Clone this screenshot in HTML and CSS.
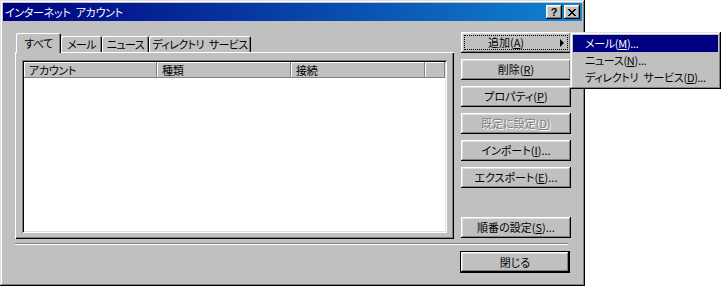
FILE: index.html
```html
<!DOCTYPE html>
<html lang="ja">
<head>
    <meta charset="UTF-8">
    <title>インターネット アカウント</title>
    <link rel="stylesheet" href="styles.css">
</head>
<body>
  <div class="dialog">
    <div class="titlebar">
      <span class="title">インターネット&ensp;アカウント</span>
      <div class="title-btns">
        <span class="tbtn help">?</span>
        <span class="tbtn">
          <svg width="8" height="7" viewBox="0 0 8 7">
            <path d="M0 0h2v1h1v1h2v-1h1v-1h2v1h-1v1h-1v1h-1v1h1v1h1v1h1v1h-2v-1h-1v-1h-2v1h-1v1h-2v-1h1v-1h1v-1h1v-1h-1v-1h-1v-1h-1z" fill="#000"/>
          </svg>
        </span>
      </div>
    </div>

    <div class="content">
      <div class="main">
        <div class="tabarea">
          <div class="tabs">
            <div class="tab active">すべて</div>
            <div class="tab w-mail">メール</div>
            <div class="tab w-news">ニュース</div>
            <div class="tab w-dir">ディレクトリ&ensp;サービス</div>
          </div>
          <div class="panel">
            <div class="listview">
              <div class="lv-header">
                <div class="col">アカウント</div>
                <div class="col">種類</div>
                <div class="col">接続</div>
                <div class="col filler"></div>
              </div>
            </div>
          </div>
        </div>

        <div class="buttons">
          <button class="btn focused has-arrow">追加(<u>A</u>)<span class="arrow"></span></button>
          <button class="btn">削除(<u>R</u>)</button>
          <button class="btn">プロパティ(<u>P</u>)</button>
          <button class="btn disabled">既定に設定(<u>D</u>)</button>
          <button class="btn">インポート(<u>I</u>)...</button>
          <button class="btn">エクスポート(<u>E</u>)...</button>
          <button class="btn bottom">順番の設定(<u>S</u>)...</button>
        </div>
      </div>

      <div class="separator"></div>

      <div class="footer">
        <button class="btn default">閉じる</button>
      </div>
    </div>
  </div>

  <div class="menu">
    <div class="menu-item selected">メール(<u>M</u>)...</div>
    <div class="menu-item">ニュース(<u>N</u>)...</div>
    <div class="menu-item">ディレクトリ&ensp;サービス(<u>D</u>)...</div>
  </div>
</body>
</html>
```

FILE: styles.css
```css
body {
    margin: 0;
    background-color: #fff;
    font-family: "Noto Sans CJK JP", sans-serif;
    font-size: 11px;
    font-feature-settings: "palt";
    letter-spacing: -0.3px;
    color: #000;
}

.dialog {
    width: 585px;
    height: 286px;
    box-sizing: border-box;
    padding: 3px;
    background-color: #c0c0c0;
    box-shadow: inset -1px -1px #000, inset 1px 1px #dfdfdf,
                inset -2px -2px #808080, inset 2px 2px #fff;
}

.titlebar {
    height: 18px;
    padding: 0 2px;
    display: flex;
    align-items: center;
    justify-content: space-between;
    background: linear-gradient(to right, #000080, #1084d0);
    color: #fff;
}

.title {
    line-height: 18px;
}

.title-btns {
    display: flex;
    gap: 2px;
}

.tbtn {
    width: 16px;
    height: 14px;
    display: flex;
    align-items: center;
    justify-content: center;
    background-color: #c0c0c0;
    box-shadow: inset -1px -1px #000, inset 1px 1px #fff,
                inset -2px -2px #808080, inset 2px 2px #dfdfdf;
}

.tbtn.help {
    font: bold 11px "Liberation Sans", sans-serif;
    color: #000;
    line-height: 14px;
}

.content {
    padding: 11px 12px 0 12px;
}

.main {
    display: flex;
    gap: 7px;
    align-items: flex-start;
}

/* tabs */

.tabarea {
    width: 439px;
    margin-top: 1px;
}

.tabs {
    height: 19px;
    padding-left: 1px;
    display: flex;
    align-items: flex-end;
    position: relative;
    z-index: 1;
}

.tab {
    height: 16px;
    box-sizing: border-box;
    display: flex;
    align-items: center;
    justify-content: center;
    line-height: 16px;
    letter-spacing: -0.6px;
    white-space: nowrap;
    background-color: #c0c0c0;
    border-radius: 2px 2px 0 0;
    box-shadow: inset 1px 1px #fff, inset -1px 0 #000, inset -2px 0 #808080;
}

.tab.active {
    width: 45px;
    height: 20px;
    margin-bottom: -1px;
    padding-bottom: 1px;
}

.w-mail { width: 41px; }
.w-news { width: 47px; }
.w-dir { width: 102px; }

.panel {
    height: 187px;
    box-sizing: border-box;
    padding: 8px 7px 6px 7px;
    box-shadow: inset 1px 1px #fff, inset -1px -1px #000, inset -2px -2px #808080;
}

.listview {
    height: 100%;
    box-sizing: border-box;
    padding: 2px;
    background-color: #fff;
    box-shadow: inset 1px 1px #808080, inset -1px -1px #fff,
                inset 2px 2px #000, inset -2px -2px #dfdfdf;
}

.lv-header {
    display: flex;
    height: 16px;
}

.col {
    width: 134px;
    box-sizing: border-box;
    padding-left: 5px;
    line-height: 16px;
    background-color: #c0c0c0;
    box-shadow: inset -1px -1px #808080, inset 1px 1px #fff;
}

.col:first-child {
    width: 133px;
}

.col.filler {
    flex: 1;
}

/* buttons */

.buttons {
    width: 110px;
    height: 206px;
    display: flex;
    flex-direction: column;
    gap: 6px;
}

.btn {
    width: 110px;
    height: 21px;
    padding: 0;
    border: 0;
    box-sizing: border-box;
    font: inherit;
    line-height: 21px;
    color: #000;
    text-align: center;
    background-color: #c0c0c0;
    box-shadow: inset -1px -1px #000, inset 1px 1px #fff,
                inset -2px -2px #808080, inset 2px 2px #dfdfdf;
}

.btn.bottom {
    margin-top: auto;
}

.btn.focused {
    outline: 1px dotted #000;
    outline-offset: -4px;
}

.btn.has-arrow {
    position: relative;
    padding-right: 20px;
}

.arrow {
    position: absolute;
    right: 7px;
    top: 7px;
    width: 0;
    height: 0;
    border-top: 4px solid transparent;
    border-bottom: 4px solid transparent;
    border-left: 4px solid #000;
}

.btn.disabled {
    color: #808080;
    text-shadow: 1px 1px #fff;
}

.separator {
    width: 553px;
    margin-top: 4px;
    border-top: 1px solid #808080;
    border-bottom: 1px solid #fff;
}

.footer {
    margin-top: 6px;
    display: flex;
    justify-content: flex-end;
}

.btn.default {
    height: 22px;
    line-height: 22px;
    box-shadow: inset 0 0 0 1px #000, inset -2px -2px #000, inset 2px 2px #fff,
                inset -3px -3px #808080, inset 3px 3px #dfdfdf;
}

/* popup menu */

.menu {
    position: absolute;
    left: 570px;
    top: 32px;
    width: 151px;
    height: 57px;
    box-sizing: border-box;
    padding: 3px;
    background-color: #c0c0c0;
    box-shadow: inset -1px -1px #000, inset 1px 1px #dfdfdf,
                inset -2px -2px #808080, inset 2px 2px #fff;
}

.menu-item {
    height: 17px;
    line-height: 17px;
    padding-left: 12px;
    white-space: nowrap;
}

.menu-item.selected {
    background-color: #000080;
    color: #fff;
}
```
